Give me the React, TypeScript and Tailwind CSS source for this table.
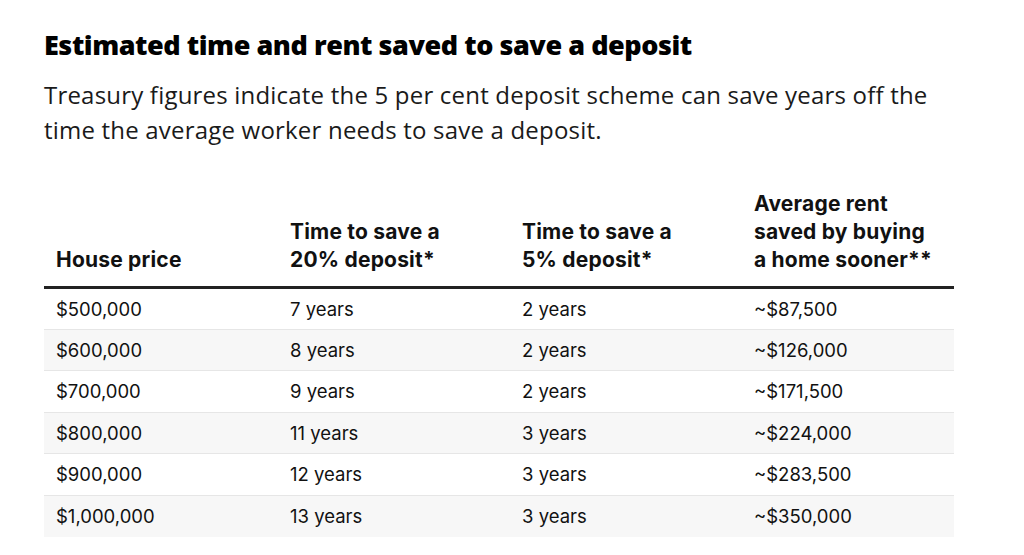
const rows = [
  ['$500,000', '7 years', '2 years', '~$87,500'],
  ['$600,000', '8 years', '2 years', '~$126,000'],
  ['$700,000', '9 years', '2 years', '~$171,500'],
  ['$800,000', '11 years', '3 years', '~$224,000'],
  ['$900,000', '12 years', '3 years', '~$283,500'],
  ['$1,000,000', '13 years', '3 years', '~$350,000'],
];

const cols = ['w-[234px]', 'w-[232px]', 'w-[232px]', 'w-[212px]'];

export default function App() {
  return (
    <div className="min-h-[555px] bg-white pl-[44px] pt-[28px] text-[#1a1a1a]">
      <h2 className="font-['Open_Sans',sans-serif] text-[27px] font-extrabold leading-[34px] tracking-[-0.45px] text-black">
        Estimated time and rent saved to save a deposit
      </h2>
      <p className="mt-[15px] w-[910px] font-['Open_Sans',sans-serif] text-[24px] leading-[35px] tracking-[0.2px] text-[#1a1a1a]">
        Treasury figures indicate the 5 per cent deposit scheme can save years off the time the
        average worker needs to save a deposit.
      </p>

      <table className="mt-[43px] w-[910px] border-collapse font-['Inter',sans-serif] text-[#111]">
        <thead>
          <tr className="border-b-[3px] border-[#222]">
            {[
              'House price',
              <>Time to save a<br />20% deposit*</>,
              <>Time to save a<br />5% deposit*</>,
              <>Average rent<br />saved by buying<br />a home sooner**</>,
            ].map((h, i) => (
              <th
                key={i}
                className={`${cols[i]} px-3 pb-[12px] text-left align-bottom text-[21px] font-bold leading-[28px] tracking-[0.2px]`}
              >
                {h}
              </th>
            ))}
          </tr>
        </thead>
        <tbody>
          {rows.map((r, ri) => (
            <tr
              key={ri}
              className={ri % 2 === 1 ? 'h-[41.5px] border-t border-[#e6e6e6] bg-[#f7f7f7]' : 'h-[41.5px] border-t border-[#e6e6e6]'}
            >
              {r.map((c, ci) => (
                <td key={ci} className="px-3 align-middle text-[18.5px] leading-[24px]">
                  {c}
                </td>
              ))}
            </tr>
          ))}
        </tbody>
      </table>
    </div>
  );
}
